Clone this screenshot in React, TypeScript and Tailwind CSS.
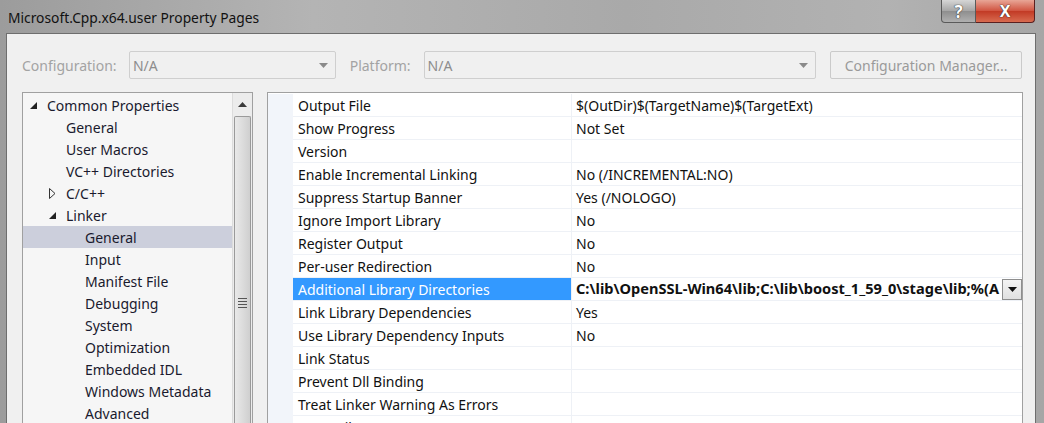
import React from "react";

const FONT = { fontFamily: '"Noto Sans", "Open Sans", sans-serif' };

type TreeItem = { label: string; level: number; arrow?: "open" | "closed"; selected?: boolean };

const tree: TreeItem[] = [
  { label: "Common Properties", level: 0, arrow: "open" },
  { label: "General", level: 1 },
  { label: "User Macros", level: 1 },
  { label: "VC++ Directories", level: 1 },
  { label: "C/C++", level: 1, arrow: "closed" },
  { label: "Linker", level: 1, arrow: "open" },
  { label: "General", level: 2, selected: true },
  { label: "Input", level: 2 },
  { label: "Manifest File", level: 2 },
  { label: "Debugging", level: 2 },
  { label: "System", level: 2 },
  { label: "Optimization", level: 2 },
  { label: "Embedded IDL", level: 2 },
  { label: "Windows Metadata", level: 2 },
  { label: "Advanced", level: 2 },
];

const props: [string, string, boolean?][] = [
  ["Output File", "$(OutDir)$(TargetName)$(TargetExt)"],
  ["Show Progress", "Not Set"],
  ["Version", ""],
  ["Enable Incremental Linking", "No (/INCREMENTAL:NO)"],
  ["Suppress Startup Banner", "Yes (/NOLOGO)"],
  ["Ignore Import Library", "No"],
  ["Register Output", "No"],
  ["Per-user Redirection", "No"],
  ["Additional Library Directories", "C:\\lib\\OpenSSL-Win64\\lib;C:\\lib\\boost_1_59_0\\stage\\lib;%(A", true],
  ["Link Library Dependencies", "Yes"],
  ["Use Library Dependency Inputs", "No"],
  ["Link Status", ""],
  ["Prevent Dll Binding", ""],
  ["Treat Linker Warning As Errors", ""],
  ["Force File Output", ""],
];

function Combo({ width, text }: { width: string; text: string }) {
  return (
    <div className={`${width} h-[28px] rounded-[2px] border border-[#cfcfcf] bg-[#f0f0f0] flex items-center pl-[3px] pr-[7px]`}>
      <span className="flex-1 text-[14px] text-[#8d8d8d]">{text}</span>
      <svg width="9" height="5" viewBox="0 0 9 5"><path d="M0 0H9L4.5 5Z" fill="#8a8a8a" /></svg>
    </div>
  );
}

export default function App() {
  return (
    <div
      className="w-[1044px] h-[423px] overflow-hidden relative bg-[linear-gradient(90deg,#9c9c9c_0%,#b4b4b4_30%,#a9a9a9_60%,#b2b2b2_85%,#a6a6a6_100%)]"
      style={FONT}
    >
      {/* title bar */}
      <div className="h-[33px] flex items-start">
        <div className="pl-[8px] pt-[8px] text-[13.8px] text-[#111] leading-[20px]">Microsoft.Cpp.x64.user Property Pages</div>
        <div className="ml-auto mr-[9px] flex h-[23px]">
          <div className="w-[35px] h-[23px] rounded-bl-[4px] border border-t-0 border-[#5a5a5a] bg-[linear-gradient(180deg,#d6d6d6,#a5a5a5_50%,#8e8e8e_51%,#b0b0b0)] flex items-center justify-center text-[17px] font-bold text-white leading-none [text-shadow:0_0_1px_#222,0_0_1px_#222]">?</div>
          <div className="w-[59px] h-[23px] rounded-br-[4px] border border-t-0 border-l-0 border-[#5a2020] bg-[linear-gradient(180deg,#e8a596,#d0533f_50%,#c23a25_51%,#d86b50)] flex items-center justify-center text-[16px] font-bold text-white leading-none [text-shadow:0_0_1px_#222,0_0_1px_#222]">X</div>
        </div>
      </div>

      {/* client */}
      <div className="ml-[6px] mr-[8px] h-[400px] border border-b-0 border-[#6e6e6e] bg-[#f0f0f0] pt-[17px] pl-[15px] pr-[13px]">
        {/* config row */}
        <div className="flex items-center h-[28px]">
          <span className="w-[107px] text-[14px] text-[#a3a3a3]">Configuration:</span>
          <Combo width="w-[207px]" text="N/A" />
          <span className="ml-[14px] w-[74px] text-[14px] text-[#a3a3a3]">Platform:</span>
          <Combo width="w-[393px]" text="N/A" />
          <div className="ml-[14px] w-[192px] h-[28px] rounded-[2px] border border-[#cacaca] bg-[#f0f0f0] flex items-center justify-center text-[14px] text-[#9a9a9a]">
            Configuration Manager...
          </div>
        </div>

        {/* panels */}
        <div className="mt-[13px] flex">
          {/* tree */}
          <div className="w-[231px] h-[340px] shrink-0 border border-b-0 border-[#a0a0a0] bg-[#f6f6f6] flex">
            <div className="flex-1 pt-[1px]">
              {tree.map((t, i) => (
                <div
                  key={i}
                  className={`h-[22px] flex items-center text-[14px] text-[#1a1a2e] ${t.selected ? "bg-[#cccfdc]" : ""}`}
                  style={{ paddingLeft: 7 + t.level * 19 }}
                >
                  <span className="w-[17px] flex items-center">
                    {t.arrow === "open" && (
                      <svg width="7" height="7" viewBox="0 0 7 7"><path d="M7 0V7H0Z" fill="#222" /></svg>
                    )}
                    {t.arrow === "closed" && (
                      <svg width="7" height="11" viewBox="0 0 7 11"><path d="M0.5 0.5L6 5.5L0.5 10.5Z" fill="none" stroke="#333" /></svg>
                    )}
                  </span>
                  <span>{t.label}</span>
                </div>
              ))}
            </div>
            {/* scrollbar */}
            <div className="w-[20px] bg-[#ececec] flex flex-col border-l border-[#dcdcdc]">
              <div className="h-[23px] flex items-center justify-center">
                <svg width="9" height="5" viewBox="0 0 9 5"><path d="M4.5 0L9 5H0Z" fill="#3a3a3a" /></svg>
              </div>
              <div className="flex-1 mx-[1px] rounded-t-[2px] border border-b-0 border-[#9a9a9a] bg-[linear-gradient(90deg,#e9e9e9,#dcdcdc_50%,#cfcfcf)] flex flex-col items-center pt-[181px] gap-[2px]">
                <div className="w-[9px] h-[1px] bg-[#555]" />
                <div className="w-[9px] h-[1px] bg-[#555]" />
                <div className="w-[9px] h-[1px] bg-[#555]" />
                <div className="w-[9px] h-[1px] bg-[#555]" />
              </div>
            </div>
          </div>

          {/* grid */}
          <div className="ml-[14px] w-[756px] h-[340px] shrink-0 border border-b-0 border-[#a0a0a0] bg-white flex overflow-hidden pt-[1px]">
            <div className="w-[25px] bg-[#f2f5fa] shrink-0" />
            <div className="flex-1 min-w-0 flex flex-col">
              {props.map(([name, value, sel], i) => (
                <div key={i} className="h-[23px] shrink-0 flex border-b border-[#eef1f6] text-[14px] text-[#111]">
                  <div
                    className={`w-[279px] shrink-0 pl-[5px] flex items-center border-r border-[#eef1f6] ${sel ? "bg-[#3399ff] text-white" : ""}`}
                  >
                    {name}
                  </div>
                  <div className="flex-1 min-w-0 flex items-center pl-[4px] overflow-hidden">
                    {sel ? (
                      <>
                        <span className="flex-1 min-w-0 overflow-hidden whitespace-nowrap font-bold text-[14.6px]">{value}</span>
                        <div className="w-[20px] h-[21px] shrink-0 border border-[#8e8e8e] bg-[linear-gradient(180deg,#f4f4f4,#e0e0e0)] flex items-center justify-center">
                          <svg width="9" height="5" viewBox="0 0 9 5"><path d="M0 0H9L4.5 5Z" fill="#111" /></svg>
                        </div>
                      </>
                    ) : (
                      <span className="whitespace-nowrap">{value}</span>
                    )}
                  </div>
                </div>
              ))}
            </div>
          </div>
        </div>
      </div>
    </div>
  );
}
